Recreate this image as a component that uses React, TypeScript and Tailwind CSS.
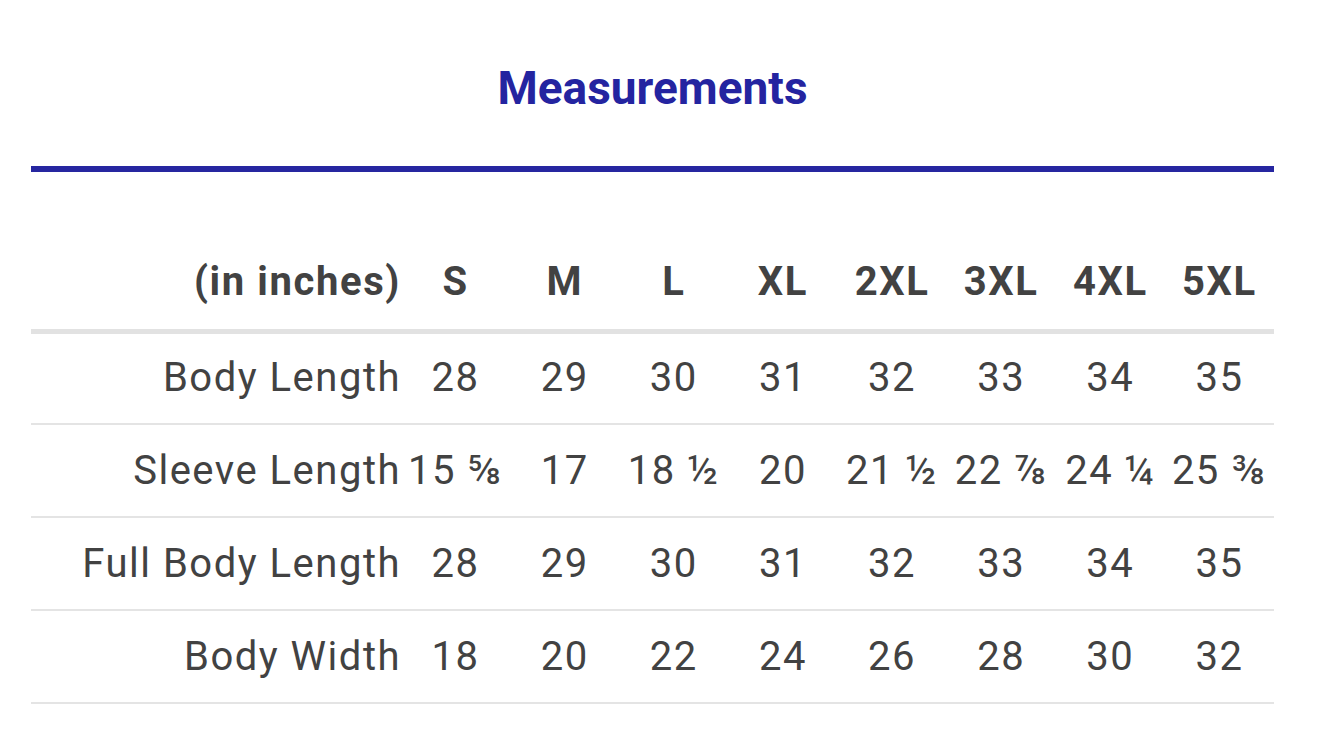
import React from 'react';

const sizes = ['S', 'M', 'L', 'XL', '2XL', '3XL', '4XL', '5XL'];

const rows: { label: string; values: string[] }[] = [
  { label: 'Body Length', values: ['28', '29', '30', '31', '32', '33', '34', '35'] },
  { label: 'Sleeve Length', values: ['15 ⅝', '17', '18 ½', '20', '21 ½', '22 ⅞', '24 ¼', '25 ⅜'] },
  { label: 'Full Body Length', values: ['28', '29', '30', '31', '32', '33', '34', '35'] },
  { label: 'Body Width', values: ['18', '20', '22', '24', '26', '28', '30', '32'] },
];

const App: React.FC = () => {
  return (
    <div className="w-[1323px] h-[756px] bg-white overflow-hidden font-['Roboto',sans-serif]">
      <div className="mx-[31px] w-[1243px]">
        <div className="h-[166px] flex justify-center pt-[58px]">
          <h2 className="text-[46px] leading-[60px] font-bold text-[#2424a0]">Measurements</h2>
        </div>
        <div className="h-[6px] bg-[#2626a0]" />

        <table className="mt-[63px] w-full table-fixed border-collapse text-[#424242]">
          <colgroup>
            <col className="w-[370px]" />
            {sizes.map(s => (
              <col key={s} />
            ))}
          </colgroup>
          <thead>
            <tr className="h-[96px] border-b-[5px] border-[#e2e2e2]">
              <th className="text-right font-bold text-[40px] tracking-[1.6px] pr-0 whitespace-nowrap">(in inches)</th>
              {sizes.map(s => (
                <th key={s} className="text-center font-bold text-[40px] tracking-[1.6px]">{s}</th>
              ))}
            </tr>
          </thead>
          <tbody>
            {rows.map(r => (
              <tr key={r.label} className="h-[93px] border-b-2 border-[#e4e4e4]">
                <td className="text-right text-[40px] tracking-[1.5px] pr-0 whitespace-nowrap">{r.label}</td>
                {r.values.map((v, i) => (
                  <td key={i} className="text-center text-[40px] tracking-[1.5px] whitespace-nowrap">{v}</td>
                ))}
              </tr>
            ))}
          </tbody>
        </table>
      </div>
    </div>
  );
};

export default App;
